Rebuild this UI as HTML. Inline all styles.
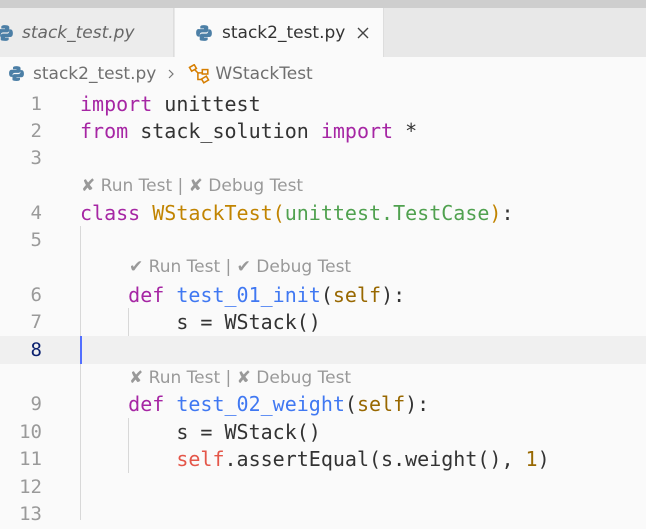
<!DOCTYPE html>
<html><head><meta charset="utf-8"><style>
*{margin:0;padding:0;box-sizing:border-box}
body{width:646px;height:520px;overflow:hidden;background:#fafafa;position:relative;font-family:"DejaVu Sans","Liberation Sans",sans-serif}
.top{position:absolute;left:0;top:0;width:646px;height:8px;background:#cecece}
.tabbar{position:absolute;left:0;top:8px;width:646px;height:49px;background:#e8e8e8}
.tab{position:absolute;top:0;height:49px;display:flex;align-items:center;font-size:17px}
.t1{left:0;width:174px;background:#ececec;border-right:1px solid #ddd;color:#666;font-style:italic}
.t2{left:175px;width:209px;background:#fafafa;color:#333;border-right:1px solid #ddd}
.bc{position:absolute;top:57px;left:0;height:33px;display:flex;align-items:center;font-size:17px;color:#6f6f6f}
.row{position:absolute;left:0;width:646px;height:27px;line-height:29px;font-family:"DejaVu Sans Mono",monospace;font-size:20px;white-space:pre;color:#333}
.ln{position:absolute;right:604px;color:#9a9a9a;font-size:19px}
.code{position:absolute;left:80px}
.lens{position:absolute;font-family:"DejaVu Sans","Liberation Sans",sans-serif;font-size:17px;color:#999;height:27px;line-height:29px;white-space:pre}
.k{color:#a626a4}.c{color:#c18401}.g{color:#50a14f}.f{color:#4078f2}.s{color:#986801}.r{color:#e45649}
.guide{position:absolute;width:1px;background:#d8d8d8}
</style></head><body>
<div class="top"></div>
<div class="tabbar">
<div class="tab t1"><svg width="18" height="18" viewBox="0 0 16 16" style="margin-left:-4px;margin-right:8px"><path d="M7.9 1C4.5 1 4.7 2.5 4.7 2.5V4h3.3v.5H3.4S1 4.2 1 7.8s2.1 3.4 2.1 3.4h1.2V9.5s-.1-2.1 2.1-2.1h3.4s2 0 2-2V2.9S12.1 1 7.9 1z" fill="#4c7fa6"/><path d="M8.1 15c3.4 0 3.2-1.5 3.2-1.5V12H8v-.5h4.6S15 11.8 15 8.2s-2.1-3.4-2.1-3.4h-1.2v1.7s.1 2.1-2.1 2.1H6.2s-2 0-2 2v3.3S3.9 15 8.1 15z" fill="#4c7fa6"/></svg>stack_test.py</div>
<div class="tab t2"><svg width="18" height="18" viewBox="0 0 16 16" style="margin-left:20px;margin-right:9px"><path d="M7.9 1C4.5 1 4.7 2.5 4.7 2.5V4h3.3v.5H3.4S1 4.2 1 7.8s2.1 3.4 2.1 3.4h1.2V9.5s-.1-2.1 2.1-2.1h3.4s2 0 2-2V2.9S12.1 1 7.9 1z" fill="#4c7fa6"/><path d="M8.1 15c3.4 0 3.2-1.5 3.2-1.5V12H8v-.5h4.6S15 11.8 15 8.2s-2.1-3.4-2.1-3.4h-1.2v1.7s.1 2.1-2.1 2.1H6.2s-2 0-2 2v3.3S3.9 15 8.1 15z" fill="#4c7fa6"/></svg>stack2_test.py<svg width="14" height="14" viewBox="0 0 14 14" style="margin-left:11px"><path d="M2 2L12 12M12 2L2 12" stroke="#444" stroke-width="1.4"/></svg></div>
</div>
<div class="bc"><svg width="17" height="17" viewBox="0 0 16 16" style="margin-left:8px;margin-right:8px"><path d="M7.9 1C4.5 1 4.7 2.5 4.7 2.5V4h3.3v.5H3.4S1 4.2 1 7.8s2.1 3.4 2.1 3.4h1.2V9.5s-.1-2.1 2.1-2.1h3.4s2 0 2-2V2.9S12.1 1 7.9 1z" fill="#4c7fa6"/><path d="M8.1 15c3.4 0 3.2-1.5 3.2-1.5V12H8v-.5h4.6S15 11.8 15 8.2s-2.1-3.4-2.1-3.4h-1.2v1.7s.1 2.1-2.1 2.1H6.2s-2 0-2 2v3.3S3.9 15 8.1 15z" fill="#4c7fa6"/></svg>stack2_test.py<svg width="10" height="12" viewBox="0 0 10 12" style="margin:0 12px 0 10px"><path d="M3 2L7 6L3 10" stroke="#777" fill="none" stroke-width="1.2"/></svg><svg width="22" height="20" viewBox="0 0 20 18" style="margin-right:5px"><g fill="none" stroke="#d67e00" stroke-width="1.4"><rect x="2" y="1.5" width="5" height="4" transform="rotate(-30 4.5 3.5)"/><rect x="13" y="5" width="5" height="4"/><rect x="13" y="12" width="5" height="4" transform="rotate(-30 15.5 14)"/><path d="M6 5L9 8H13M9 8V14H13"/></g></svg>WStackTest</div>

<div style="position:absolute;left:0;top:336px;width:646px;height:28px;background:#f0f0f0"></div>
<div style="position:absolute;left:80px;top:336px;width:2px;height:28px;background:#526fff"></div>
<div class="guide" style="left:80px;top:226px;height:110px"></div>
<div class="guide" style="left:80px;top:364px;height:156px"></div>
<div class="guide" style="left:128px;top:308px;height:28px"></div>
<div class="guide" style="left:128px;top:418px;height:55px"></div>

<div class="row" style="top:90px"><span class="ln">1</span><span class="code"><span class="k">import</span> unittest</span></div>
<div class="row" style="top:117px"><span class="ln">2</span><span class="code"><span class="k">from</span> stack_solution <span class="k">import</span> *</span></div>
<div class="row" style="top:144px"><span class="ln">3</span></div>
<div class="lens" style="left:81px;top:172px">✘ Run Test | ✘ Debug Test</div>
<div class="row" style="top:199px"><span class="ln">4</span><span class="code"><span class="k">class</span> <span class="c">WStackTest(</span><span class="g">unittest.TestCase</span><span class="c">)</span>:</span></div>
<div class="row" style="top:226px"><span class="ln">5</span></div>
<div class="lens" style="left:129px;top:253px">✔ Run Test | ✔ Debug Test</div>
<div class="row" style="top:281px"><span class="ln">6</span><span class="code">    <span class="k">def</span> <span class="f">test_01_init</span>(<span class="s">self</span>):</span></div>
<div class="row" style="top:308px"><span class="ln">7</span><span class="code">        s = WStack()</span></div>
<div class="row" style="top:336px"><span class="ln" style="color:#0b216f">8</span></div>
<div class="lens" style="left:129px;top:364px">✘ Run Test | ✘ Debug Test</div>
<div class="row" style="top:390px"><span class="ln">9</span><span class="code">    <span class="k">def</span> <span class="f">test_02_weight</span>(<span class="s">self</span>):</span></div>
<div class="row" style="top:418px"><span class="ln">10</span><span class="code">        s = WStack()</span></div>
<div class="row" style="top:445px"><span class="ln">11</span><span class="code">        <span class="r">self</span>.assertEqual(s.weight(), <span class="s">1</span>)</span></div>
<div class="row" style="top:473px"><span class="ln">12</span></div>
<div class="row" style="top:500px"><span class="ln">13</span></div>
</body></html>
